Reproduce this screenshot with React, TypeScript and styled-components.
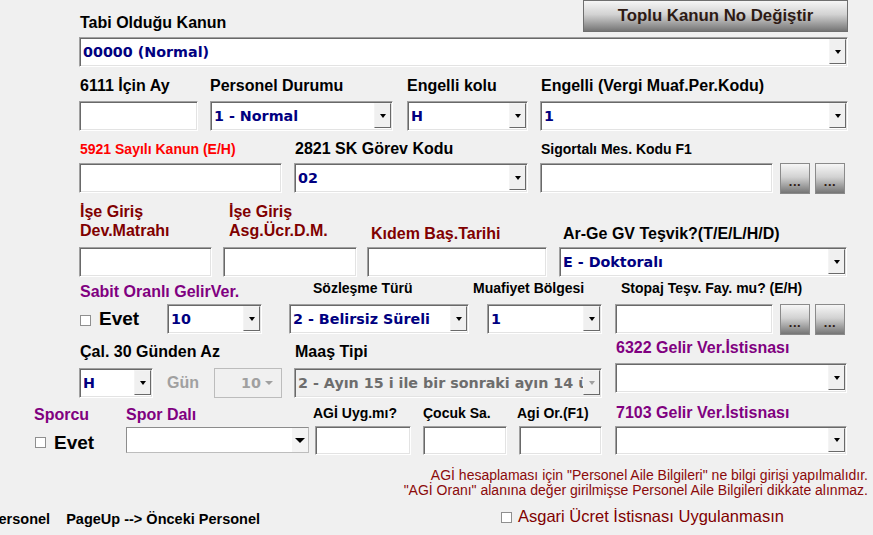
import React from "react";
import styled, { createGlobalStyle, css } from "styled-components";

const GlobalStyle = createGlobalStyle`
  html, body {
    margin: 0;
    padding: 0;
    background: #f0f0f0;
  }
  body {
    font-family: "Liberation Sans", Arial, sans-serif;
  }
`;

type Tone = "black" | "maroon" | "purple" | "red" | "gray";
const tones: Record<Tone, string> = {
  black: "#000000",
  maroon: "#800000",
  purple: "#800080",
  red: "#ff0000",
  gray: "#a0a0a0",
};

const Page = styled.div`
  width: 873px;
  height: 535px;
  overflow: hidden;
  background: #f0f0f0;
  color: #000;
`;

const Row = styled.div<{ $pl?: number; $mt?: number }>`
  display: flex;
  align-items: flex-end;
  padding-left: ${(p) => p.$pl ?? 79}px;
  margin-top: ${(p) => p.$mt ?? 0}px;
`;

const Field = styled.div<{ $w: number; $ml?: number; $mb?: number }>`
  display: flex;
  flex-direction: column;
  flex: none;
  width: ${(p) => p.$w}px;
  margin-left: ${(p) => p.$ml ?? 0}px;
  margin-bottom: ${(p) => p.$mb ?? 0}px;
`;

const Label = styled.div<{ $tone?: Tone; $small?: boolean; $dx?: number; $mb?: number; $lh?: number }>`
  font-weight: bold;
  font-size: ${(p) => (p.$small ? 14 : 16)}px;
  line-height: ${(p) => p.$lh ?? (p.$small ? 16 : 18)}px;
  color: ${(p) => tones[p.$tone ?? "black"]};
  white-space: nowrap;
  margin-left: ${(p) => p.$dx ?? 1}px;
  margin-bottom: ${(p) => p.$mb ?? 6}px;
`;

const Group = styled.div`
  display: flex;
  align-items: center;
`;

const sunken = css`
  border: 1px solid;
  border-color: #a0a0a0 #ffffff #ffffff #a0a0a0;
  box-shadow: inset 1px 1px 0 #696969, inset -1px -1px 0 #e3e3e3;
`;

const Box = styled.div<{ $w: number; $h?: number; $ml?: number; $muted?: boolean }>`
  ${sunken}
  box-sizing: border-box;
  display: flex;
  align-items: stretch;
  flex: none;
  width: ${(p) => p.$w}px;
  height: ${(p) => p.$h ?? 30}px;
  margin-left: ${(p) => p.$ml ?? 0}px;
  background: ${(p) => (p.$muted ? "#f0f0f0" : "#ffffff")};
`;

const Value = styled.span<{ $muted?: boolean }>`
  flex: 1;
  min-width: 0;
  overflow: hidden;
  white-space: nowrap;
  display: flex;
  align-items: center;
  padding-left: 3px;
  font-family: "DejaVu Sans", Verdana, sans-serif;
  font-weight: bold;
  font-size: 14.3px;
  color: ${(p) => (p.$muted ? "#6d6d6d" : "#000080")};
`;

const DropBtn = styled.span<{ $muted?: boolean }>`
  width: 17px;
  flex: none;
  margin: 1px 1px 2px 0;
  box-sizing: border-box;
  background: #f0f0f0;
  border: 1px solid;
  border-color: #f4f4f4 #696969 #696969 #f4f4f4;
  display: flex;
  align-items: center;
  justify-content: center;

  &::after {
    content: "";
    border-left: 3.5px solid transparent;
    border-right: 3.5px solid transparent;
    border-top: 4px solid ${(p) => (p.$muted ? "#a0a0a0" : "#000000")};
  }
`;

const FlatBox = styled.div<{ $w: number }>`
  box-sizing: border-box;
  display: flex;
  flex: none;
  width: ${(p) => p.$w}px;
  height: 26px;
  background: #ffffff;
  border: 1px solid;
  border-color: #8c8c8c #bdbdbd #bdbdbd #8c8c8c;
`;

const FlatArrow = styled.span`
  width: 16px;
  margin-left: auto;
  background: #f4f4f4;
  display: flex;
  align-items: center;
  justify-content: center;

  &::after {
    content: "";
    border-left: 5px solid transparent;
    border-right: 5px solid transparent;
    border-top: 5px solid #000;
  }
`;

const DisabledBox = styled.div<{ $w: number }>`
  box-sizing: border-box;
  display: flex;
  align-items: center;
  justify-content: flex-end;
  gap: 4px;
  width: ${(p) => p.$w}px;
  height: 30px;
  margin-left: auto;
  padding-right: 8px;
  border: 1px solid #bcbcbc;
  background: #f0f0f0;
  font-family: "DejaVu Sans", Verdana, sans-serif;
  font-weight: bold;
  font-size: 14.3px;
  color: #a0a0a0;

  &::after {
    content: "";
    border-left: 4px solid transparent;
    border-right: 4px solid transparent;
    border-top: 4px solid #a0a0a0;
  }
`;

const gradient = css`
  border: 1px solid #6f6f6f;
  background: linear-gradient(#f6f6f6 0%, #d2d2d2 45%, #757575 100%);
  font-family: "Liberation Sans", Arial, sans-serif;
  font-weight: bold;
  color: #2e1a14;
  padding: 0;
  box-sizing: border-box;
`;

const TopButton = styled.button`
  ${gradient}
  margin-left: auto;
  margin-right: 25px;
  width: 265px;
  height: 32px;
  font-size: 16.8px;
`;

const DotsBtn = styled.button<{ $ml: number }>`
  ${gradient}
  width: 30px;
  height: 31px;
  margin-left: ${(p) => p.$ml}px;
  margin-bottom: -1px;
  align-self: flex-start;
  display: flex;
  align-items: flex-end;
  justify-content: center;
  padding-bottom: 6px;
  font-size: 13px;
  line-height: 10px;
  letter-spacing: 0.5px;
  border-color: #8a8a8a;
`;

const CheckBox = styled.span<{ $ml?: number; $mt?: number }>`
  box-sizing: border-box;
  width: 11px;
  height: 11px;
  flex: none;
  margin-left: ${(p) => p.$ml ?? 1}px;
  margin-top: ${(p) => p.$mt ?? 0}px;
  border: 1px solid #8f8f8f;
  background: #ffffff;
`;

const BigText = styled.span`
  margin-left: 8px;
  font-weight: bold;
  font-size: 19px;
  line-height: 22px;
`;

const GrayText = styled.span`
  font-weight: bold;
  font-size: 16px;
  line-height: 18px;
  color: #a0a0a0;
`;

const Notes = styled.div`
  margin-top: 12.5px;
  padding-right: 5px;
  text-align: right;
  font-size: 14px;
  line-height: 15px;
  color: #8b0a0a;
`;

const Footer = styled.div`
  display: flex;
  align-items: flex-end;
  margin-top: 9px;
`;

const PageKeys = styled.div`
  width: 260px;
  overflow: hidden;
  display: flex;
  justify-content: flex-end;
  white-space: pre;
  font-weight: bold;
  font-size: 14.5px;
  line-height: 16px;
`;

const Exempt = styled.label`
  display: flex;
  align-items: center;
  margin-left: 241px;
  margin-bottom: 1px;
  font-size: 16.5px;
  line-height: 19px;
  color: #800000;

  span + span {
    margin-left: 6px;
  }
`;

const Combo = ({ w, value = "", h, muted }: { w: number; value?: string; h?: number; muted?: boolean }) => (
  <Box $w={w} $h={h} $muted={muted}>
    <Value $muted={muted}>{value}</Value>
    <DropBtn $muted={muted} />
  </Box>
);

const TextBox = ({ w, h, ml }: { w: number; h?: number; ml?: number }) => <Box $w={w} $h={h} $ml={ml} />;

export default function App() {
  return (
    <Page>
      <GlobalStyle />

      <Row $pl={80}>
        <Label $dx={0} $mb={0}>Tabi Olduğu Kanun</Label>
        <TopButton>Toplu Kanun No Değiştir</TopButton>
      </Row>

      <Row $mt={5}>
        <Combo w={769} value="00000 (Normal)" />
      </Row>

      <Row $mt={10}>
        <Field $w={119}>
          <Label>6111 İçin Ay</Label>
          <TextBox w={119} />
        </Field>
        <Field $w={183} $ml={12}>
          <Label $dx={0}>Personel Durumu</Label>
          <Combo w={183} value="1 - Normal" />
        </Field>
        <Field $w={121} $ml={14}>
          <Label $dx={0}>Engelli kolu</Label>
          <Combo w={121} value="H" />
        </Field>
        <Field $w={308} $ml={12}>
          <Label>Engelli (Vergi Muaf.Per.Kodu)</Label>
          <Combo w={308} value="1" />
        </Field>
      </Row>

      <Row $mt={9}>
        <Field $w={203}>
          <Label $small $tone="red">5921 Sayılı Kanun (E/H)</Label>
          <TextBox w={203} />
        </Field>
        <Field $w={234} $ml={12}>
          <Label $mb={5}>2821 SK Görev Kodu</Label>
          <Combo w={234} value="02" />
        </Field>
        <Field $w={305} $ml={12}>
          <Label $small>Sigortalı Mes. Kodu F1</Label>
          <Group>
            <TextBox w={233} />
            <DotsBtn $ml={7}>...</DotsBtn>
            <DotsBtn $ml={5}>...</DotsBtn>
          </Group>
        </Field>
      </Row>

      <Row $mt={9}>
        <Field $w={133}>
          <Label $tone="maroon" $lh={19} $mb={7}>
            İşe Giriş
            <br />
            Dev.Matrahı
          </Label>
          <TextBox w={133} />
        </Field>
        <Field $w={134} $ml={11}>
          <Label $tone="maroon" $lh={19} $mb={7} $dx={6}>
            İşe Giriş
            <br />
            Asg.Ücr.D.M.
          </Label>
          <TextBox w={134} />
        </Field>
        <Field $w={180} $ml={10}>
          <Label $tone="maroon" $dx={4} $mb={4.5}>Kıdem Baş.Tarihi</Label>
          <TextBox w={180} />
        </Field>
        <Field $w={288} $ml={12}>
          <Label $dx={4} $mb={4.5}>Ar-Ge GV Teşvik?(T/E/L/H/D)</Label>
          <Combo w={288} value="E - Doktoralı" />
        </Field>
      </Row>

      <Row $mt={3}>
        <Field $w={183}>
          <Label $tone="purple" $mb={3.5}>Sabit Oranlı GelirVer.</Label>
          <Group>
            <CheckBox $mt={3} />
            <BigText>Evet</BigText>
            <Box $w={95} style={{ marginLeft: "auto" }}>
              <Value>10</Value>
              <DropBtn />
            </Box>
          </Group>
        </Field>
        <Field $w={180} $ml={27}>
          <Label $small $dx={24} $mb={8}>Sözleşme Türü</Label>
          <Combo w={180} value="2 - Belirsiz Süreli" />
        </Field>
        <Field $w={115} $ml={18}>
          <Label $small $dx={-14} $mb={8}>Muafiyet Bölgesi</Label>
          <Combo w={115} value="1" />
        </Field>
        <Field $w={230} $ml={13}>
          <Label $small $dx={6} $mb={8}>Stopaj Teşv. Fay. mu? (E/H)</Label>
          <Group>
            <TextBox w={158} />
            <DotsBtn $ml={7}>...</DotsBtn>
            <DotsBtn $ml={5}>...</DotsBtn>
          </Group>
        </Field>
      </Row>

      <Row $mt={4.5}>
        <Field $w={74}>
          <Label $mb={7.5}>Çal. 30 Günden Az</Label>
          <Combo w={74} value="H" />
        </Field>
        <Field $w={115} $ml={14}>
          <Group>
            <GrayText>Gün</GrayText>
            <DisabledBox $w={68}>10</DisabledBox>
          </Group>
        </Field>
        <Field $w={308} $ml={12}>
          <Label $mb={7.5}>Maaş Tipi</Label>
          <Combo w={308} muted value="2 - Ayın 15 i ile bir sonraki ayın 14 ü" />
        </Field>
        <Field $w={232} $ml={13} $mb={5}>
          <Label $tone="purple" $mb={6.5}>6322 Gelir Ver.İstisnası</Label>
          <Combo w={232} />
        </Field>
      </Row>

      <Row $pl={34} $mt={5.5}>
        <Field $w={92} $mb={1.5}>
          <Label $tone="purple" $dx={0} $mb={8}>Sporcu</Label>
          <Group>
            <CheckBox />
            <BigText>Evet</BigText>
          </Group>
        </Field>
        <Field $w={183} $mb={2}>
          <Label $tone="purple" $dx={0} $mb={3.5}>Spor Dalı</Label>
          <FlatBox $w={183}>
            <FlatArrow />
          </FlatBox>
        </Field>
        <Field $w={96} $ml={6}>
          <Label $small $dx={-2} $mb={5}>AGİ Uyg.mı?</Label>
          <TextBox w={96} h={29} />
        </Field>
        <Field $w={84} $ml={12}>
          <Label $small $dx={0} $mb={5}>Çocuk Sa.</Label>
          <TextBox w={84} h={29} />
        </Field>
        <Field $w={83} $ml={12}>
          <Label $small $dx={-2} $mb={5}>Agi Or.(F1)</Label>
          <TextBox w={83} h={29} />
        </Field>
        <Field $w={232} $ml={13}>
          <Label $tone="purple" $mb={4.5}>7103 Gelir Ver.İstisnası</Label>
          <Combo w={232} h={29} />
        </Field>
      </Row>

      <Notes>
        AGİ hesaplaması için "Personel Aile Bilgileri" ne bilgi girişi yapılmalıdır.
        <br />
        "AGİ Oranı" alanına değer girilmişse Personel Aile Bilgileri dikkate alınmaz.
      </Notes>

      <Footer>
        <PageKeys>
          <span>{"PageDown --> Sonraki Personel    PageUp --> Önceki Personel"}</span>
        </PageKeys>
        <Exempt>
          <CheckBox $ml={0} $mt={3} />
          <span>Asgari Ücret İstisnası Uygulanmasın</span>
        </Exempt>
      </Footer>
    </Page>
  );
}
